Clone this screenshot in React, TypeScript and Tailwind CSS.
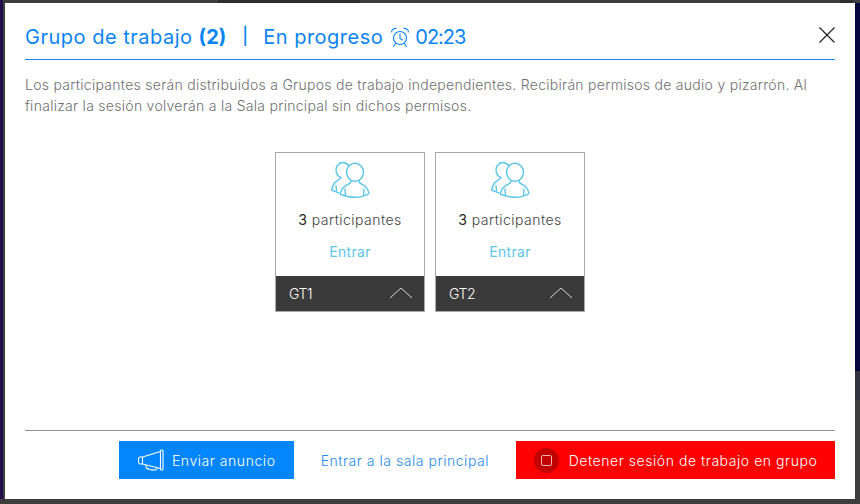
import React from "react";

const PeopleIcon: React.FC = () => (
  <svg width="39" height="37" viewBox="0 0 39 37" fill="none" stroke="#5cc6ea" strokeWidth="1.4" strokeLinejoin="round" strokeLinecap="round">
    <path d="M17.500 4.500C16 2.500 14.500 1.500 12 1.500 8 1.500 5 4.800 5 9c0 3.500 2 6.500 5 7.500" />
    <path d="M9.500 17c-1 2-4 2.500-6 5-1.500 2-2.300 4.500-2.800 7l7 2.800" />
    <path d="M5 24.500c0 1.500.5 3 .5 5" />
    <ellipse cx="24" cy="11.300" rx="8.500" ry="9" />
    <path d="M20 20.500c-.5 2.500-4 3-6.500 5-2.500 2-3.500 4.500-4.500 7.500 5 2 10.500 3.300 15 3.300 5 0 10-1.300 14-3.800-.5-3-2-5.500-3.500-7-2.500-2-6-2.500-6.500-5" />
    <path d="M14 28c0 2 .3 4 .5 6.500M33 28c0 2-.3 3.500-.5 6" />
  </svg>
);

const AlarmIcon: React.FC = () => (
  <svg width="20" height="21" viewBox="0 0 20 21" fill="none" stroke="#0a84f2" strokeWidth="1.1" strokeLinecap="round">
    <circle cx="10" cy="11" r="6.500" />
    <path d="M10 7v4.500l2.500 1.500" />
    <path d="M1.500 5C2 2.500 4 1 6 1.500M18.500 5C18 2.500 16 1 14 1.500" />
    <path d="M5.500 16.500L3.500 19.500M14.500 16.500l2 3" />
  </svg>
);

const MegaphoneIcon: React.FC = () => (
  <svg width="27" height="22" viewBox="0 0 27 22" fill="none" stroke="#fff" strokeWidth="1.1" strokeLinejoin="round">
    <rect x="23.500" y="1" width="2.500" height="20" rx="1" />
    <path d="M23.500 2.500L5.500 8H3C2 8 1.500 9 1.500 11s.5 4 1.500 4h2.500l18 4.500" />
    <path d="M5.500 8v7" />
    <path d="M8.500 16l1 3c1 1 6 2 9 2 1 0 1.500-1 1-2.500" />
  </svg>
);

const GroupCard: React.FC<{ name: string }> = ({ name }) => (
  <div className="flex h-[160px] w-[150px] flex-col border border-[#a9a9a9] bg-white">
    <div className="flex flex-1 flex-col items-center pt-[8px]">
      <PeopleIcon />
      <div className="mt-[12px] text-[14px] font-light leading-[20px] tracking-[0.45px] text-[#444]">
        <span className="font-normal text-[#222]">3</span> participantes
      </div>
      <div className="mt-3 text-[14px] leading-[20px] tracking-[0.3px] text-[#5cc6ea]">Entrar</div>
    </div>
    <div className="flex h-[35px] items-center justify-between bg-[#3a3a3a] pl-[13px] pr-[11px] text-[14px] font-light tracking-[-0.5px] text-white">
      <span>{name}</span>
      <svg width="24" height="14" viewBox="0 0 24 14" fill="none" stroke="#d8d8d8" strokeWidth="1">
        <path d="M1 11L12 1l11 10" />
      </svg>
    </div>
  </div>
);

export default function App() {
  return (
    <div className="relative h-[504px] w-[860px] overflow-hidden bg-[#3e3e3e] font-['Inter','Open_Sans',sans-serif]">
      {/* page behind the dialog */}
      <div className="absolute left-0 top-0 h-[499px] w-[3px] bg-[#230e4a]" />
      <div className="absolute right-0 top-[3px] h-[368px] w-[5px] bg-[#05063d]" />
      <div className="absolute right-0 top-[371px] h-[29px] w-[5px] bg-[#33333f]" />
      <div className="absolute left-[218px] top-0 h-[3px] w-[142px] bg-[#2e2e2e]" />
      <div className="absolute left-[840px] top-0 h-[3px] w-[13px] bg-[#2e2e2e]" />
      <div className="relative mx-[5px] mt-[3px] flex h-[496px] w-[850px] flex-col bg-white px-5">
        <header className="flex h-[57px] items-center justify-between border-b border-[#1a86e8] pt-[12px] text-[20px] tracking-[0.5px] text-[#0a84f2]">
          <div className="flex items-center">
            <span>Grupo de trabajo <b className="font-bold tracking-normal">(2)</b></span>
            <span className="ml-[16px] mr-[15px] text-[17px] font-medium tracking-normal">|</span>
            <span>En progreso</span>
            <span className="ml-[7px] mr-[5px]"><AlarmIcon /></span>
            <span className="tracking-[-1px]">02:23</span>
          </div>
          <svg className="-mt-[5px]" width="16" height="16" viewBox="0 0 16 16" fill="none" stroke="#222" strokeWidth="1.2">
            <path d="M0.500 0.500l15 15M15.500 0.500l-15 15" />
          </svg>
        </header>
        <p className="mt-[14px] text-[14px] font-light leading-[21px] tracking-[0.28px] text-[#707070]">
          Los participantes serán distribuidos a Grupos de trabajo independientes. Recibirán permisos de audio y pizarrón. Al finalizar la sesión volverán a la Sala principal sin dichos permisos.
        </p>
        <div className="mt-[36px] flex justify-center gap-[10px]">
          <GroupCard name="GT1" />
          <GroupCard name="GT2" />
        </div>
        <footer className="mt-[118px] flex items-center justify-end border-t border-[#8e8e8e] pt-[10px] text-[14px] font-light tracking-[0.55px]">
          <button className="flex h-[38px] w-[175px] items-center justify-center gap-[8px] bg-[#0385fc] text-white">
            <MegaphoneIcon />
            Enviar anuncio
          </button>
          <a className="mx-[27px] tracking-[0.53px] text-[#1f8bf0]">Entrar a la sala principal</a>
          <button className="flex h-[38px] w-[319px] items-center justify-center gap-[10px] bg-[#fe0000] text-white">
            <span className="flex size-[25px] items-center justify-center rounded-full bg-[#c30000]">
              <span className="size-[11px] rounded-[2px] border border-[#f3b0b0]" />
            </span>
            Detener sesión de trabajo en grupo
          </button>
        </footer>
      </div>
    </div>
  );
}
